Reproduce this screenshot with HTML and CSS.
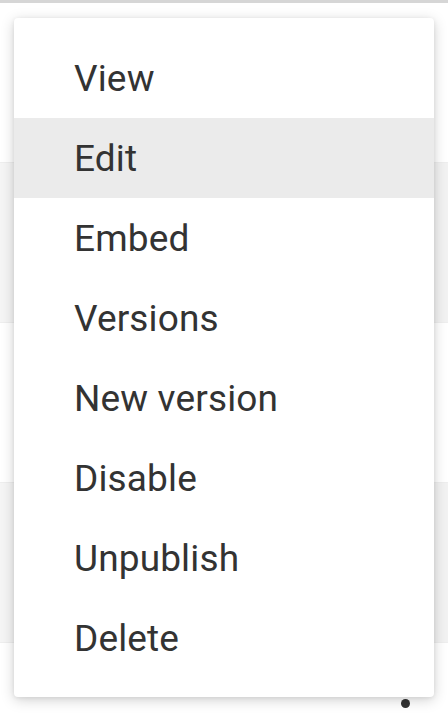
FILE: index.html
```html
<!DOCTYPE html>
<html>
<head>
<meta charset="utf-8">
<link rel="stylesheet" href="styles.css">
</head>
<body>
<div class="page">
  <div class="topbar"></div>
  <div class="rows">
    <div class="row"><div class="cell-main"></div><div class="cell-side"></div></div>
    <div class="row alt"><div class="cell-main"></div><div class="cell-side"></div></div>
    <div class="row"><div class="cell-main"></div><div class="cell-side"></div></div>
    <div class="row alt"><div class="cell-main"></div><div class="cell-side"></div></div>
    <div class="row"><div class="cell-main"></div><div class="cell-side"><span class="dot"></span></div></div>
  </div>
  <ul class="menu">
    <li class="item">View</li>
    <li class="item active">Edit</li>
    <li class="item">Embed</li>
    <li class="item">Versions</li>
    <li class="item">New version</li>
    <li class="item">Disable</li>
    <li class="item">Unpublish</li>
    <li class="item">Delete</li>
  </ul>
</div>
</body>
</html>
```
FILE: styles.css
```css
html, body {
  margin: 0;
  padding: 0;
  background: #ffffff;
}
body {
  font-family: Roboto, "Noto Sans", sans-serif;
}
.page {
  position: relative;
  width: 448px;
  height: 714px;
  overflow: hidden;
}
.topbar {
  height: 3px;
  background: #d6d6d6;
}
.rows {
  display: flex;
  flex-direction: column;
}
.row {
  display: flex;
  height: 160px;
  border-top: 1px solid #eeeeee;
  box-sizing: border-box;
}
.row:first-child {
  height: 159px;
  border-top: none;
}
.row.alt .cell-main {
  background: #f5f5f5;
}
.row.alt .cell-side {
  background: #f2f2f2;
}
.cell-main {
  width: 364px;
}
.cell-side {
  flex: 1;
  display: flex;
  justify-content: center;
  padding-top: 56px;
  padding-right: 1px;
}
.dot {
  display: block;
  width: 9px;
  height: 9px;
  border-radius: 50%;
  background: #333333;
}
.menu {
  position: absolute;
  left: 14px;
  top: 18px;
  width: 420px;
  margin: 0;
  padding: 20px 0 19px;
  list-style: none;
  background: #ffffff;
  border-radius: 4px;
  box-shadow: 0 3px 14px rgba(0, 0, 0, 0.18), 0 1px 4px rgba(0, 0, 0, 0.08);
}
.item {
  height: 79px;
  padding-top: 1px;
  line-height: 79px;
  padding-left: 60px;
  font-size: 37px;
  letter-spacing: 0.15px;
  color: #333333;
}
.item.active {
  background: #ebebeb;
}
```
